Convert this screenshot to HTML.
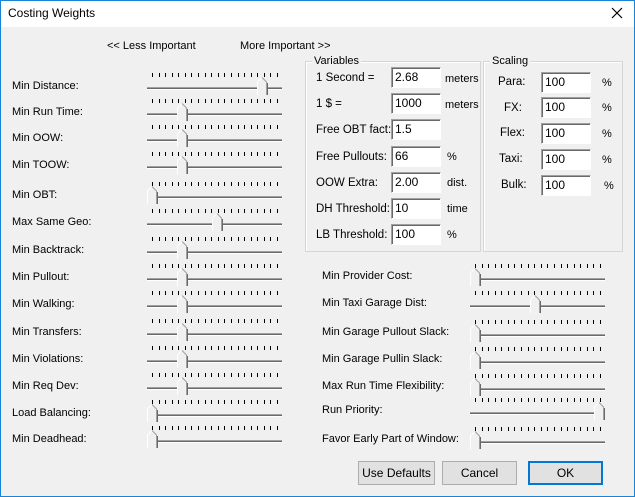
<!DOCTYPE html>
<html><head><style>
*{margin:0;padding:0;box-sizing:border-box}
body{width:635px;height:497px;background:#f0f0f0;font-family:"Liberation Sans",Arial,sans-serif;font-size:11px;color:#000;position:relative;overflow:hidden}
#frame{position:absolute;left:0;top:0;width:635px;height:497px;border:1px solid #1883d7}
#title{position:absolute;left:1px;top:1px;width:633px;height:26px;background:#fff}
.t{position:absolute;white-space:nowrap}
.v{font-size:11.5px}
.grp{position:absolute;border:1px solid #d5d5d5;box-shadow:inset 1px 1px 0 #fff}
.grp span{position:absolute;top:-7px;left:6px;background:#f0f0f0;padding:0 2px}
.inp{position:absolute;width:50px;height:21px;background:#fff;border-top:1px solid #a0a0a0;border-left:1px solid #a0a0a0;border-right:1px solid #fff;border-bottom:1px solid #fff;box-shadow:inset 1px 1px 0 #696969;padding:2px 0 0 3px;font-size:12px}
.btn{position:absolute;height:24px;background:#e1e1e1;border:1px solid #adadad;text-align:center;line-height:22px;font-size:12px}
</style></head><body>
<div id="frame"></div>
<div id="title"></div>
<div class="t" style="left:8px;top:6px;font-size:12px">Costing Weights</div>
<svg style="position:absolute;left:611px;top:7px" width="12" height="12"><path d="M1 1L11 11M11 1L1 11" stroke="#000" stroke-width="1.2"/></svg>
<div class="t" style="left:107px;top:40px">&lt;&lt; Less Important</div>
<div class="t" style="left:240px;top:40px">More Important &gt;&gt;</div>

<div class="grp" style="left:305px;top:61px;width:176px;height:191px"><span>Variables</span></div>
<div class="grp" style="left:483px;top:61px;width:140px;height:191px"><span>Scaling</span></div>

<div class="t v" style="left:316px;top:72px">1 Second =</div>
<div class="t v" style="left:316px;top:98px">1 $ =</div>
<div class="t v" style="left:316px;top:124px">Free OBT fact:</div>
<div class="t v" style="left:316px;top:151px">Free Pullouts:</div>
<div class="t v" style="left:316px;top:177px">OOW Extra:</div>
<div class="t v" style="left:316px;top:203px">DH Threshold:</div>
<div class="t v" style="left:316px;top:229px">LB Threshold:</div>
<div class="inp" style="left:391px;top:67px">2.68</div>
<div class="inp" style="left:391px;top:93px">1000</div>
<div class="inp" style="left:391px;top:119px">1.5</div>
<div class="inp" style="left:391px;top:146px">66</div>
<div class="inp" style="left:391px;top:172px">2.00</div>
<div class="inp" style="left:391px;top:198px">10</div>
<div class="inp" style="left:391px;top:224px">100</div>
<div class="t" style="left:445px;top:73px">meters</div>
<div class="t" style="left:445px;top:99px">meters</div>
<div class="t" style="left:447px;top:151px">%</div>
<div class="t" style="left:447px;top:177px">dist.</div>
<div class="t" style="left:447px;top:203px">time</div>
<div class="t" style="left:447px;top:229px">%</div>

<div class="t v" style="left:498px;top:76px">Para:</div>
<div class="t v" style="left:504px;top:102px">FX:</div>
<div class="t v" style="left:500px;top:127px">Flex:</div>
<div class="t v" style="left:499px;top:153px">Taxi:</div>
<div class="t v" style="left:501px;top:179px">Bulk:</div>
<div class="inp" style="left:541px;top:72px">100</div>
<div class="inp" style="left:541px;top:97px">100</div>
<div class="inp" style="left:541px;top:123px">100</div>
<div class="inp" style="left:541px;top:149px">100</div>
<div class="inp" style="left:541px;top:175px">100</div>
<div class="t" style="left:602px;top:77px">%</div>
<div class="t" style="left:602px;top:102px">%</div>
<div class="t" style="left:602px;top:128px">%</div>
<div class="t" style="left:602px;top:154px">%</div>
<div class="t" style="left:604px;top:180px">%</div>

<div id="labels"></div>
<svg id="sl" style="position:absolute;left:0;top:0" width="635" height="497"></svg>

<div class="btn" style="left:358px;top:461px;width:77px">Use Defaults</div>
<div class="btn" style="left:442px;top:461px;width:75px">Cancel</div>
<div class="btn" style="left:528px;top:461px;width:75px;border:2px solid #0078d7;line-height:20px">OK</div>

<script>
var L=[["Min Distance:",87,257],["Min Run Time:",113,177],["Min OOW:",139,177],["Min TOOW:",166,177],["Min OBT:",196,147],["Max Same Geo:",223,212],["Min Backtrack:",251,177],["Min Pullout:",278,177],["Min Walking:",305,177],["Min Transfers:",333,177],["Min Violations:",360,177],["Min Req Dev:",387,177],["Load Balancing:",414,147],["Min Deadhead:",440,147]];
var R=[["Min Provider Cost:",277,470],["Min Taxi Garage Dist:",304,530],["Min Garage Pullout Slack:",333,470],["Min Garage Pullin Slack:",360,470],["Max Run Time Flexibility:",387,470],["Run Priority:",411,594],["Favor Early Part of Window:",440,470]];
var h="",s="";
function sl(x0,ty,tx){
 var w=135;
 for(var i=0;i<20;i++){var x=Math.round(x0+5+i*(125/19));s+='<rect x="'+x+'" y="'+(ty-15)+'" width="1" height="4" fill="#000"/>';}
 s+='<rect x="'+x0+'" y="'+(ty-1)+'" width="'+w+'" height="1" fill="#a0a0a0"/><rect x="'+x0+'" y="'+ty+'" width="'+w+'" height="1" fill="#696969"/><rect x="'+x0+'" y="'+(ty+1)+'" width="'+w+'" height="1" fill="#fff"/>';
 var a=tx,b=tx+10,top=ty-11,bot=ty+7;
 s+='<path d="M'+a+' '+bot+'L'+a+' '+(top+5)+'L'+(a+5)+' '+top+'L'+b+' '+(top+5)+'L'+b+' '+bot+'Z" fill="#f0f0f0"/>';
 s+='<path d="M'+(a+0.5)+' '+bot+'L'+(a+0.5)+' '+(top+5)+'L'+(a+5)+' '+(top+0.5)+'" stroke="#fff" fill="none"/>';
 s+='<path d="M'+(a+5)+' '+(top+0.5)+'L'+(b-0.5)+' '+(top+5)+'L'+(b-0.5)+' '+bot+'" stroke="#a0a0a0" fill="none"/>';
 s+='<path d="M'+(b+0.5)+' '+(top+6)+'L'+(b+0.5)+' '+bot+'" stroke="#696969" fill="none"/>';
}
L.forEach(function(r){h+='<div class="t" style="left:12px;top:'+(r[1]-7)+'px">'+r[0]+'</div>';sl(147,r[1]+1,r[2]);});
R.forEach(function(r){h+='<div class="t" style="left:322px;top:'+(r[1]-7)+'px">'+r[0]+'</div>';sl(470,r[1]+2,r[2]);});
document.getElementById("labels").innerHTML=h;
document.getElementById("sl").innerHTML=s;
</script>
</body></html>
